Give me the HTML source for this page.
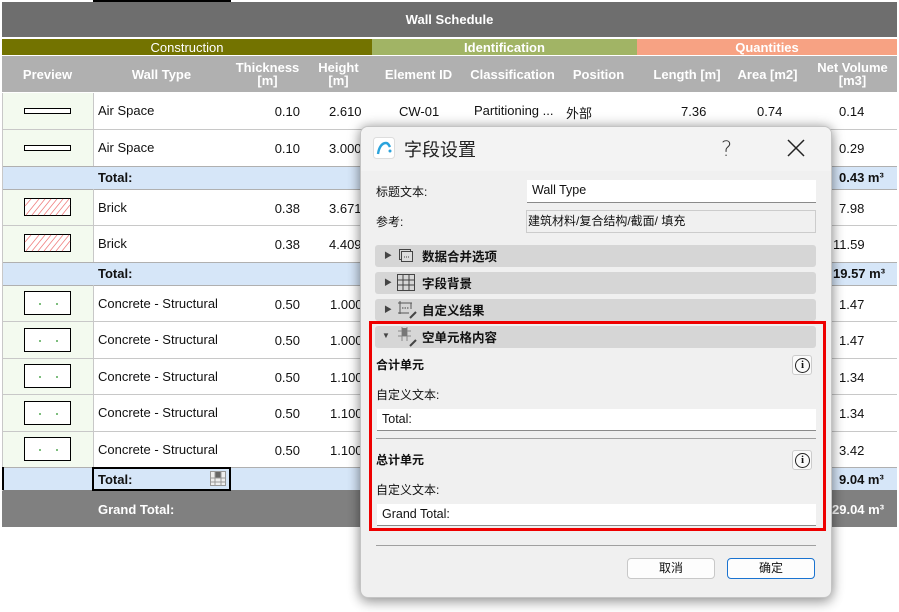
<!DOCTYPE html>
<html><head><meta charset="utf-8">
<style>
*{margin:0;padding:0;box-sizing:border-box}
body{width:899px;height:612px;position:relative;overflow:hidden;background:#fff;font-family:"Liberation Sans","Noto Sans CJK SC",sans-serif;font-size:13px;color:#111}
.a{position:absolute}
.hd{color:#fff;font-weight:bold;text-align:center;display:flex;align-items:center;justify-content:center;line-height:13px}
.t{position:absolute;white-space:nowrap}
.r{text-align:right}
.cn{font-family:"Liberation Sans","Noto Sans CJK SC",sans-serif}
.sec{position:absolute;left:375px;width:441px;height:22px;background:#d6d6d6;border-radius:3px;font-weight:bold;font-size:12.5px}
.inp{position:absolute;background:#fff;border-bottom:1px solid #8a8a8a;font-size:12.5px;padding-left:5px;line-height:21px}
.btn{position:absolute;height:21px;background:#fdfdfd;border:1px solid #c8c8c8;border-radius:4px;text-align:center;font-size:12px;line-height:19px}
.info{position:absolute;width:20px;height:20px;border:1px solid #ccc;border-radius:3px;background:#fafafa}
.info span{position:absolute;left:2px;top:2px;width:15px;height:15px;border:1.3px solid #222;border-radius:50%;font:bold 11px "Liberation Serif",serif;text-align:center;line-height:13px}
</style></head><body>
<div class="a" style="left:93px;top:0;width:138px;height:2px;background:#000"></div>
<div class="a hd" style="left:2px;top:2px;width:895px;height:35px;background:#6e6e6e;font-size:13px">Wall Schedule</div>
<div class="a hd" style="left:2px;top:39px;width:370px;height:16px;background:#737300;font-weight:normal">Construction</div>
<div class="a hd" style="left:372px;top:39px;width:265px;height:16px;background:#a1b465">Identification</div>
<div class="a hd" style="left:637px;top:39px;width:260px;height:16px;background:#f7a283">Quantities</div>
<div class="a" style="left:2px;top:56px;width:895px;height:36px;background:#b0b0b0"></div>
<div class="a hd" style="left:2px;top:56px;width:91px;height:36px">Preview</div>
<div class="a hd" style="left:93px;top:56px;width:137px;height:36px">Wall Type</div>
<div class="a hd" style="left:230px;top:56px;width:75px;height:36px">Thickness<br>[m]</div>
<div class="a hd" style="left:305px;top:56px;width:67px;height:36px">Height<br>[m]</div>
<div class="a hd" style="left:372px;top:56px;width:93px;height:36px">Element ID</div>
<div class="a hd" style="left:465px;top:56px;width:95px;height:36px">Classification</div>
<div class="a hd" style="left:560px;top:56px;width:77px;height:36px">Position</div>
<div class="a hd" style="left:637px;top:56px;width:100px;height:36px">Length [m]</div>
<div class="a hd" style="left:727px;top:56px;width:81px;height:36px">Area [m2]</div>
<div class="a hd" style="left:808px;top:56px;width:89px;height:36px">Net Volume<br>[m3]</div>

<div class="a" style="left:2px;top:93px;width:91px;height:73px;background:#f3faef"></div>
<div class="a" style="left:2px;top:189px;width:91px;height:73px;background:#f3faef"></div>
<div class="a" style="left:2px;top:285px;width:91px;height:182px;background:#f3faef"></div>
<div class="a" style="left:2px;top:166px;width:895px;height:23px;background:#d6e6f8"></div>
<div class="a" style="left:2px;top:262px;width:895px;height:23px;background:#d6e6f8"></div>
<div class="a" style="left:2px;top:467px;width:895px;height:23px;background:#d6e6f8"></div>
<div class="a" style="left:2px;top:490px;width:895px;height:37px;background:#808080"></div>
<div class="a" style="left:2px;top:129px;width:895px;height:1px;background:#c8c8c8"></div>
<div class="a" style="left:2px;top:166px;width:895px;height:1px;background:#b0b0b0"></div>
<div class="a" style="left:2px;top:189px;width:895px;height:1px;background:#b0b0b0"></div>
<div class="a" style="left:2px;top:225px;width:895px;height:1px;background:#c8c8c8"></div>
<div class="a" style="left:2px;top:262px;width:895px;height:1px;background:#b0b0b0"></div>
<div class="a" style="left:2px;top:285px;width:895px;height:1px;background:#b0b0b0"></div>
<div class="a" style="left:2px;top:321px;width:895px;height:1px;background:#c8c8c8"></div>
<div class="a" style="left:2px;top:358px;width:895px;height:1px;background:#c8c8c8"></div>
<div class="a" style="left:2px;top:394px;width:895px;height:1px;background:#c8c8c8"></div>
<div class="a" style="left:2px;top:431px;width:895px;height:1px;background:#c8c8c8"></div>
<div class="a" style="left:2px;top:467px;width:895px;height:1px;background:#b0b0b0"></div>
<div class="a" style="left:93px;top:93px;width:1px;height:73px;background:#c8c8c8"></div>
<div class="a" style="left:93px;top:189px;width:1px;height:73px;background:#c8c8c8"></div>
<div class="a" style="left:93px;top:285px;width:1px;height:182px;background:#c8c8c8"></div>
<div class="a" style="left:2px;top:93px;width:1px;height:398px;background:#c8c8c8"></div>
<div class="a" style="left:2px;top:467px;width:2px;height:23px;background:#000"></div>

<div class="a" style="left:24px;top:108px;width:47px;height:6px;border:1px solid #000;background:#fff"></div>
<div class="a" style="left:24px;top:145px;width:47px;height:6px;border:1px solid #000;background:#fff"></div>
<svg class="a" style="left:24px;top:198px" width="47" height="18"><rect x="0.5" y="0.5" width="46" height="17" fill="#fff" stroke="#000"/><g stroke="#f08080" stroke-width="0.8"><path d="M2 17L15 1M8 17L21 1M14 17L27 1M20 17L33 1M26 17L39 1M32 17L45 1M38 17L46 7M1 8L7 1"/></g></svg>
<svg class="a" style="left:24px;top:234px" width="47" height="18"><rect x="0.5" y="0.5" width="46" height="17" fill="#fff" stroke="#000"/><g stroke="#f08080" stroke-width="0.8"><path d="M2 17L15 1M8 17L21 1M14 17L27 1M20 17L33 1M26 17L39 1M32 17L45 1M38 17L46 7M1 8L7 1"/></g></svg>
<svg class="a" style="left:24px;top:291px" width="47" height="24"><rect x="0.5" y="0.5" width="46" height="23" fill="#fff" stroke="#000"/><circle cx="16" cy="13" r="1" fill="#5a5"/><circle cx="33" cy="13" r="1" fill="#5a5"/></svg>
<svg class="a" style="left:24px;top:328px" width="47" height="24"><rect x="0.5" y="0.5" width="46" height="23" fill="#fff" stroke="#000"/><circle cx="16" cy="13" r="1" fill="#5a5"/><circle cx="33" cy="13" r="1" fill="#5a5"/></svg>
<svg class="a" style="left:24px;top:364px" width="47" height="24"><rect x="0.5" y="0.5" width="46" height="23" fill="#fff" stroke="#000"/><circle cx="16" cy="13" r="1" fill="#5a5"/><circle cx="33" cy="13" r="1" fill="#5a5"/></svg>
<svg class="a" style="left:24px;top:401px" width="47" height="24"><rect x="0.5" y="0.5" width="46" height="23" fill="#fff" stroke="#000"/><circle cx="16" cy="13" r="1" fill="#5a5"/><circle cx="33" cy="13" r="1" fill="#5a5"/></svg>
<svg class="a" style="left:24px;top:437px" width="47" height="24"><rect x="0.5" y="0.5" width="46" height="23" fill="#fff" stroke="#000"/><circle cx="16" cy="13" r="1" fill="#5a5"/><circle cx="33" cy="13" r="1" fill="#5a5"/></svg>

<div class="t" style="left:98px;top:103px">Air Space</div><div class="t r" style="left:240px;width:60px;top:104px">0.10</div><div class="t" style="left:329px;top:104px">2.610</div><div class="t" style="left:399px;top:104px">CW-01</div><div class="t" style="left:474px;top:103px">Partitioning ...</div><div class="t" style="left:566px;top:103px">外部</div><div class="t" style="left:681px;top:104px">7.36</div><div class="t" style="left:757px;top:104px">0.74</div><div class="t" style="left:839px;top:104px">0.14</div>
<div class="t" style="left:98px;top:140px">Air Space</div><div class="t r" style="left:240px;width:60px;top:141px">0.10</div><div class="t" style="left:329px;top:141px">3.000</div><div class="t" style="left:839px;top:141px">0.29</div>
<div class="t" style="left:98px;top:170px;font-weight:bold">Total:</div><div class="t" style="left:839px;top:170px;font-weight:bold">0.43 m³</div>
<div class="t" style="left:98px;top:200px">Brick</div><div class="t r" style="left:240px;width:60px;top:201px">0.38</div><div class="t" style="left:329px;top:201px">3.671</div><div class="t" style="left:839px;top:201px">7.98</div>
<div class="t" style="left:98px;top:236px">Brick</div><div class="t r" style="left:240px;width:60px;top:237px">0.38</div><div class="t" style="left:329px;top:237px">4.409</div><div class="t" style="left:833px;top:237px">11.59</div>
<div class="t" style="left:98px;top:266px;font-weight:bold">Total:</div><div class="t" style="left:833px;top:266px;font-weight:bold">19.57 m³</div>
<div class="t" style="left:98px;top:296px">Concrete - Structural</div><div class="t r" style="left:240px;width:60px;top:297px">0.50</div><div class="t" style="left:330px;top:297px">1.000</div><div class="t" style="left:839px;top:297px">1.47</div>
<div class="t" style="left:98px;top:332px">Concrete - Structural</div><div class="t r" style="left:240px;width:60px;top:333px">0.50</div><div class="t" style="left:330px;top:333px">1.000</div><div class="t" style="left:839px;top:333px">1.47</div>
<div class="t" style="left:98px;top:369px">Concrete - Structural</div><div class="t r" style="left:240px;width:60px;top:370px">0.50</div><div class="t" style="left:330px;top:370px">1.100</div><div class="t" style="left:839px;top:370px">1.34</div>
<div class="t" style="left:98px;top:405px">Concrete - Structural</div><div class="t r" style="left:240px;width:60px;top:406px">0.50</div><div class="t" style="left:330px;top:406px">1.100</div><div class="t" style="left:839px;top:406px">1.34</div>
<div class="t" style="left:98px;top:442px">Concrete - Structural</div><div class="t r" style="left:240px;width:60px;top:443px">0.50</div><div class="t" style="left:330px;top:443px">1.100</div><div class="t" style="left:839px;top:443px">3.42</div>
<div class="a" style="left:92px;top:467px;width:139px;height:24px;border:2px solid #000"></div>
<div class="t" style="left:98px;top:472px;font-weight:bold">Total:</div>
<svg class="a" style="left:210px;top:471px" width="16" height="15"><rect x="0.5" y="0.5" width="15" height="14" fill="#eee" stroke="#999"/><rect x="5" y="1" width="6" height="6" fill="#666"/><path d="M1 7H15M1 11H15M5 1V15M11 1V15" stroke="#999"/></svg>
<div class="t" style="left:839px;top:472px;font-weight:bold">9.04 m³</div>
<div class="t" style="left:98px;top:502px;font-weight:bold;color:#fff">Grand Total:</div>
<div class="t" style="left:832px;top:502px;font-weight:bold;color:#fff">29.04 m³</div>

<div class="a" style="left:360px;top:126px;width:472px;height:472px;background:#f0f0f0;border:1px solid #c4c4c4;border-radius:8px;box-shadow:0 0 12px rgba(0,0,0,.35),0 6px 12px rgba(0,0,0,.2);overflow:hidden">
 <div class="a" style="left:0;top:0;width:472px;height:44px;background:#f3f3f3"></div>
</div>
<svg class="a" style="left:373px;top:137px" width="22" height="22"><rect x="0.5" y="0.5" width="21" height="21" rx="3" fill="#fff" stroke="#ddd"/><path d="M5 17C6 10 9 6 13 6C15 6 16 8 17 10" stroke="#2aa3dc" stroke-width="2.4" fill="none"/><circle cx="17" cy="14" r="1.5" fill="#2aa3dc"/></svg>
<div class="t cn" style="left:404px;top:136px;font-size:18px;color:#222">字段设置</div>
<div class="t" style="left:721px;top:137px;font-size:21px;color:#333;font-family:'DejaVu Sans',sans-serif;font-weight:200">?</div>
<svg class="a" style="left:787px;top:139px" width="18" height="18"><path d="M1 1L17 17M17 1L1 17" stroke="#222" stroke-width="1.5"/></svg>

<div class="t cn" style="left:376px;top:183px;font-size:12px">标题文本:</div>
<div class="inp" style="left:527px;top:180px;width:289px;height:23px">Wall Type</div>
<div class="t cn" style="left:376px;top:213px;font-size:12px">参考:</div>
<div class="a cn" style="left:526px;top:210px;width:290px;height:23px;border:1px solid #ccc;background:#f0f0f0;font-size:12px;line-height:20px;padding-left:1px">建筑材料/复合结构/截面/ 填充</div>

<div class="sec" style="top:245px"></div><div class="sec" style="top:272px"></div><div class="sec" style="top:299px"></div><div class="sec" style="top:326px"></div>
<div class="t" style="left:384px;top:250px;font-size:8px;color:#444">▶</div>
<div class="t" style="left:384px;top:277px;font-size:8px;color:#444">▶</div>
<div class="t" style="left:384px;top:304px;font-size:8px;color:#444">▶</div>
<div class="t" style="left:382px;top:331px;font-size:8px;color:#444">▼</div>
<svg class="a" style="left:398px;top:248px" width="16" height="16"><rect x="1.5" y="1.5" width="11" height="10" fill="none" stroke="#444"/><rect x="3.5" y="3.5" width="11" height="10" fill="#ddd" stroke="#444"/><path d="M6 9H12" stroke="#444" stroke-dasharray="1 1"/></svg>
<svg class="a" style="left:397px;top:274px" width="18" height="17"><rect x="0.5" y="0.5" width="17" height="16" fill="none" stroke="#444"/><path d="M6 1V16M12 1V16M1 6H17M1 11H17" stroke="#444"/></svg>
<svg class="a" style="left:397px;top:300px" width="20" height="20"><path d="M1 3H15M3 1V14M1 13H12M14 3V9" stroke="#555" fill="none"/><path d="M5 8H12" stroke="#444" stroke-dasharray="1.5 1"/><path d="M13 18L19 12" stroke="#444" stroke-width="2"/></svg>
<svg class="a" style="left:397px;top:327px" width="20" height="20"><path d="M1 4H14M1 9H14M5 0V14M10 0V14" stroke="#888"/><rect x="5" y="1" width="5" height="8" fill="#777"/><path d="M13 19L19 13" stroke="#444" stroke-width="2"/></svg>
<div class="t cn" style="left:422px;top:246px;font-size:12.5px;font-weight:bold">数据合并选项</div>
<div class="t cn" style="left:422px;top:273px;font-size:12.5px;font-weight:bold">字段背景</div>
<div class="t cn" style="left:422px;top:300px;font-size:12.5px;font-weight:bold">自定义结果</div>
<div class="t cn" style="left:422px;top:327px;font-size:12.5px;font-weight:bold">空单元格内容</div>

<div class="t cn" style="left:376px;top:356px;font-size:12px;font-weight:bold">合计单元</div>
<div class="info" style="left:792px;top:355px"><span>i</span></div>
<div class="t cn" style="left:376px;top:386px;font-size:12px">自定义文本:</div>
<div class="inp" style="left:377px;top:409px;width:439px;height:22px">Total:</div>
<div class="a" style="left:376px;top:438px;width:440px;height:1px;background:#a0a0a0"></div>
<div class="t cn" style="left:376px;top:451px;font-size:12px;font-weight:bold">总计单元</div>
<div class="info" style="left:792px;top:450px"><span>i</span></div>
<div class="t cn" style="left:376px;top:481px;font-size:12px">自定义文本:</div>
<div class="inp" style="left:377px;top:504px;width:439px;height:22px">Grand Total:</div>
<div class="a" style="left:369px;top:321px;width:457px;height:210px;border:3px solid #e00"></div>
<div class="a" style="left:376px;top:545px;width:440px;height:1px;background:#a0a0a0"></div>
<div class="btn cn" style="left:627px;top:558px;width:88px">取消</div>
<div class="btn cn" style="left:727px;top:558px;width:88px;border-color:#1a73d0">确定</div>
</body></html>
